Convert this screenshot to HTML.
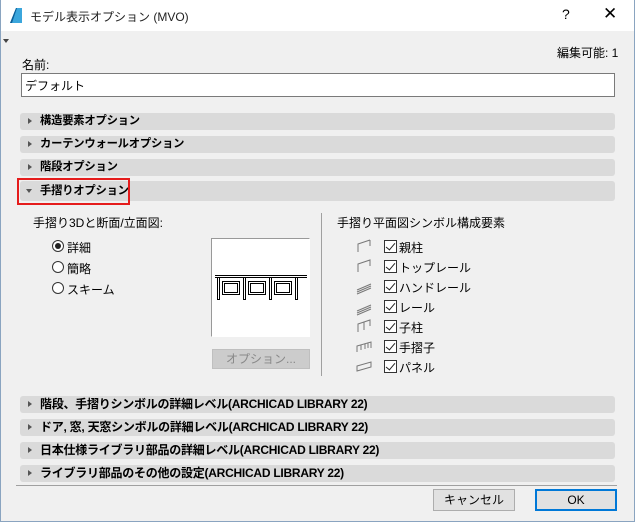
<!DOCTYPE html>
<html><head><meta charset="utf-8"><style>
*{box-sizing:border-box;margin:0;padding:0}
body{width:635px;height:522px;overflow:hidden;background:#f0f0f0;font-family:"Liberation Sans","Noto Sans CJK JP",sans-serif;font-size:12px;color:#000;position:relative}
.win{position:absolute;left:0;top:0;width:635px;height:522px;border:1px solid #8aa4c0;border-top:none}
.title{position:absolute;left:0;top:0;width:635px;height:31px;background:#fff}
.a{position:absolute}
.bar{position:absolute;left:20px;width:595px;height:17px;background:#dadada;border-radius:3px;font-weight:bold;font-size:11.3px;line-height:17px;padding-left:20px;letter-spacing:-0.2px}
.bar.b{font-size:12px;letter-spacing:-0.25px}
.bar.c:before{content:"";position:absolute;left:8px;top:5px;border-left:4px solid #555;border-top:3.5px solid transparent;border-bottom:3.5px solid transparent}
.rad{position:absolute;width:12px;height:12px;border:1px solid #333;border-radius:50%;background:#fff}
.cb{position:absolute;left:384px;width:13px;height:13px;border:1px solid #333;background:#fff}
.cb:after{content:"";position:absolute;left:3px;top:0px;width:4px;height:8px;border:solid #222;border-width:0 1.5px 1.5px 0;transform:rotate(40deg)}
.btn{position:absolute;height:22px;background:#e1e1e1;border:1px solid #adadad;text-align:center;line-height:20px}
</style></head><body>
<div class="title"></div>
<svg class="a" style="left:8px;top:6px" width="16" height="18"><rect width="16" height="18" fill="#fff"/><path d="M2 17 L8 2 L14 2 L14 17Z" fill="#3ba6dc"/><path d="M2 17 L8 2 L9 2 L4 17Z" fill="#0c5f98"/></svg>
<div class="a" style="left:30px;top:8px;font-size:12px;color:#222">モデル表示オプション (MVO)</div>
<div class="a" style="left:562px;top:6px;font-size:14px">?</div>
<div class="a" style="left:603px;top:4px;font-size:17px">✕</div>
<div class="a" style="left:3px;top:39px;border-top:4px solid #444;border-left:3.5px solid transparent;border-right:3.5px solid transparent"></div>
<div class="a" style="left:557px;top:44px">編集可能: 1</div>
<div class="a" style="left:22px;top:56px">名前:</div>
<div class="a" style="left:21px;top:73px;width:594px;height:24px;background:#fff;border:1px solid #7a7a7a;padding:3px 3px;font-size:12px">デフォルト</div>
<div class="bar c" style="top:113px">構造要素オプション</div>
<div class="bar c" style="top:136px">カーテンウォールオプション</div>
<div class="bar c" style="top:159px">階段オプション</div>
<div class="bar" style="top:181px;height:20px;line-height:20px;padding-left:20px">手摺りオプション</div>
<div class="a" style="left:26px;top:189px;border-top:4px solid #555;border-left:3.5px solid transparent;border-right:3.5px solid transparent"></div>
<div class="a" style="left:17px;top:178px;width:113px;height:27px;border:2px solid #e51c1c"></div>
<div class="a" style="left:33px;top:214px">手摺り3Dと断面/立面図:</div>
<div class="rad" style="left:52px;top:240px"></div><div class="a" style="left:55px;top:243px;width:6px;height:6px;border-radius:50%;background:#222"></div>
<div class="a" style="left:67px;top:239px">詳細</div>
<div class="rad" style="left:52px;top:261px"></div><div class="a" style="left:67px;top:260px">簡略</div>
<div class="rad" style="left:52px;top:282px"></div><div class="a" style="left:67px;top:281px">スキーム</div>
<div class="a" style="left:211px;top:238px;width:99px;height:99px;background:#fff;border:1px solid #999;border-right-color:#fff;border-bottom-color:#fff"></div>
<svg class="a" style="left:214px;top:270px" width="94" height="30" stroke="#000" fill="none" stroke-width="1"><path d="M1 5.5H93M1 7.5H93"/><path d="M3.5 8V30M5.5 8V30M29.5 8V30M31.5 8V30M55.5 8V30M57.5 8V30M81.5 8V30M83.5 8V30"/><path d="M3.5 29.5H5.5M29.5 29.5H31.5M55.5 29.5H57.5M81.5 29.5H83.5"/><rect x="8.5" y="11.5" width="17" height="13"/><rect x="10.5" y="13.5" width="13" height="9"/><rect x="34.5" y="11.5" width="17" height="13"/><rect x="36.5" y="13.5" width="13" height="9"/><rect x="60.5" y="11.5" width="17" height="13"/><rect x="62.5" y="13.5" width="13" height="9"/></svg>
<div class="btn" style="left:212px;top:349px;width:98px;height:20px;line-height:18px;background:#ccc;border-color:#bfbfbf;color:#888">オプション...</div>
<div class="a" style="left:321px;top:213px;width:1px;height:163px;background:#a0a0a0"></div>
<div class="a" style="left:337px;top:214px">手摺り平面図シンボル構成要素</div>
<svg class="a" style="left:355px;top:238px" width="20" height="136" stroke="#777" fill="none" stroke-width="1"><path d="M3 14V6L15 2M15 2V8"/><path d="M3 34V26L15 22V28"/><path d="M2 52L16 46M2 54L16 48M2 56L16 50"/><path d="M2 73L16 67M2 75L16 69M2 77L16 71"/><path d="M3 94V86L15 82V88M9 84V92"/><path d="M2 114V108L16 104V110M6 107V112M10 106V111M13 105V110"/><path d="M2 133L16 129V124L2 128Z"/></svg>
<div class="cb" style="top:240px"></div><div class="a" style="left:399px;top:239px">親柱</div>
<div class="cb" style="top:260px"></div><div class="a" style="left:399px;top:259px">トップレール</div>
<div class="cb" style="top:280px"></div><div class="a" style="left:399px;top:279px">ハンドレール</div>
<div class="cb" style="top:300px"></div><div class="a" style="left:399px;top:299px">レール</div>
<div class="cb" style="top:320px"></div><div class="a" style="left:399px;top:319px">子柱</div>
<div class="cb" style="top:340px"></div><div class="a" style="left:399px;top:339px">手摺子</div>
<div class="cb" style="top:360px"></div><div class="a" style="left:399px;top:359px">パネル</div>
<div class="bar c b" style="top:396px">階段、手摺りシンボルの詳細レベル(ARCHICAD LIBRARY 22)</div>
<div class="bar c b" style="top:419px">ドア, 窓, 天窓シンボルの詳細レベル(ARCHICAD LIBRARY 22)</div>
<div class="bar c b" style="top:442px">日本仕様ライブラリ部品の詳細レベル(ARCHICAD LIBRARY 22)</div>
<div class="bar c b" style="top:465px">ライブラリ部品のその他の設定(ARCHICAD LIBRARY 22)</div>
<div class="a" style="left:16px;top:485px;width:601px;height:1px;background:#a0a0a0"></div>
<div class="btn" style="left:433px;top:489px;width:82px">キャンセル</div>
<div class="btn" style="left:535px;top:489px;width:82px;border:2px solid #0078d7;line-height:18px">OK</div>
<div class="win"></div>
</body></html>
